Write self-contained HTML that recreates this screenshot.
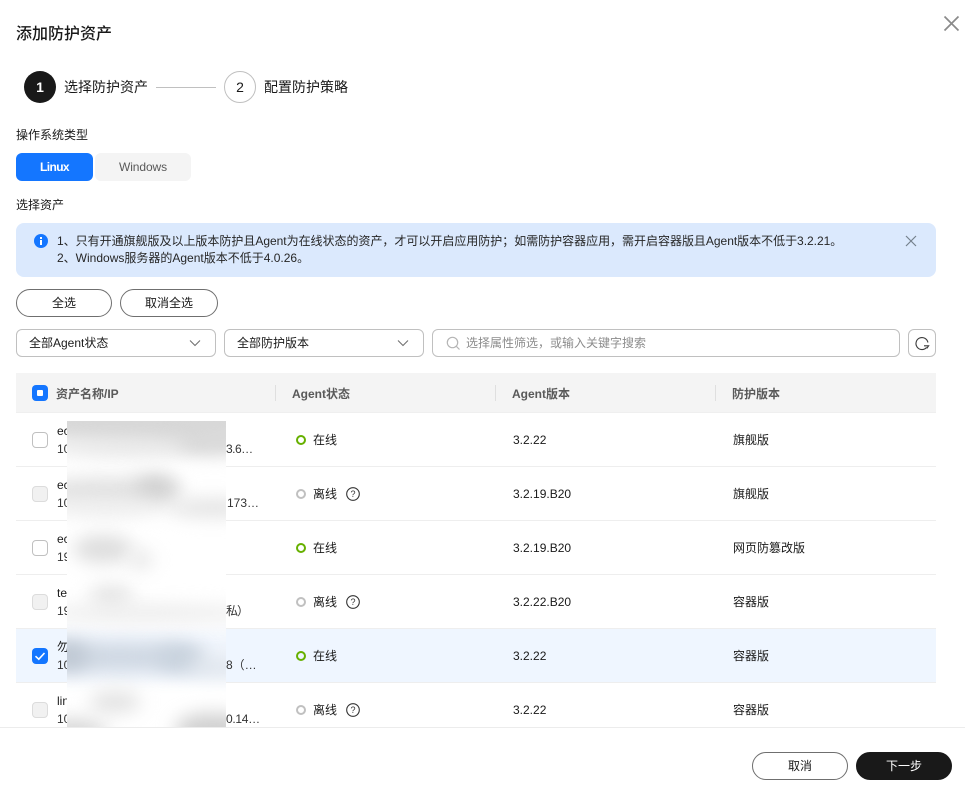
<!DOCTYPE html>
<html lang="zh">
<head>
<meta charset="utf-8">
<title>添加防护资产</title>
<style>
html,body{margin:0;padding:0;background:#fff}
body{width:965px;height:795px;position:relative;overflow:hidden;font-family:"Liberation Sans","Noto Sans CJK SC",sans-serif;font-size:12px;color:#191919}
.a{position:absolute;white-space:nowrap}
.t{line-height:18px;height:18px}
.btn{position:absolute;box-sizing:border-box;border:1px solid #6f6f6f;border-radius:14px;height:28px;line-height:26px;text-align:center;background:#fff;color:#191919}
.sel{position:absolute;box-sizing:border-box;border:1px solid #c0c0c0;border-radius:6px;height:28px;line-height:26px;background:#fff;top:329px}
.sel svg{position:absolute;left:172px;top:7px}
.row{position:absolute;left:16px;width:920px;height:53px;border-bottom:1px solid #eee}
.cb{position:absolute;left:32px;width:16px;height:16px;box-sizing:border-box;border:1px solid #c0c0c0;border-radius:4px;background:#fff}
.cb.dis{background:#f1f1f1;border-color:#dcdcdc}
.on{width:10px;height:10px;box-sizing:border-box;border-radius:50%;border:2.5px solid #66b000;position:absolute;left:296px}
.off{width:10px;height:10px;box-sizing:border-box;border-radius:50%;border:2px solid #c0c0c0;position:absolute;left:296px}
.th{color:#595959;font-weight:bold}
.div{position:absolute;top:385px;width:1px;height:16px;background:#dfdfdf}
.blob{position:absolute;border-radius:50%;filter:blur(9px)}
</style>
</head>
<body>
<div class="a" style="left:16px;top:24px;font-size:16px;line-height:22px;font-weight:500">添加防护资产</div>
<svg class="a" style="left:943px;top:15px" width="17" height="17" viewBox="0 0 17 17"><path d="M1.5 1.5L15.5 15.5M15.5 1.5L1.5 15.5" stroke="#8a8a8a" stroke-width="1.7" fill="none"/></svg>

<div class="a" style="left:24px;top:71px;width:32px;height:32px;border-radius:50%;background:#191919;color:#fff;text-align:center;line-height:32px;font-size:14px;font-weight:bold">1</div>
<div class="a" style="left:64px;top:77px;font-size:14px;line-height:20px">选择防护资产</div>
<div class="a" style="left:156px;top:87px;width:60px;height:1px;background:#c0c0c0"></div>
<div class="a" style="left:224px;top:71px;width:32px;height:32px;box-sizing:border-box;border:1px solid #c0c0c0;border-radius:50%;text-align:center;line-height:30px;font-size:14px">2</div>
<div class="a" style="left:264px;top:77px;font-size:14px;line-height:20px">配置防护策略</div>

<div class="a t" style="left:16px;top:126px">操作系统类型</div>
<div class="a" style="left:16px;top:153px;width:77px;height:28px;background:#1476ff;border-radius:6px;color:#fff;font-weight:bold;text-align:center;line-height:28px;letter-spacing:-.6px">Linux</div>
<div class="a" style="left:95px;top:153px;width:96px;height:28px;background:#f4f4f4;border-radius:6px;color:#595959;text-align:center;line-height:28px;letter-spacing:-.1px">Windows</div>
<div class="a t" style="left:16px;top:196px">选择资产</div>

<div class="a" style="left:16px;top:223px;width:920px;height:54px;background:#dbe9fd;border-radius:8px"></div>
<svg class="a" style="left:34px;top:234px" width="14" height="14" viewBox="0 0 14 14"><circle cx="7" cy="7" r="7" fill="#1476ff"/><rect x="6" y="6" width="2" height="5" fill="#fff"/><rect x="6" y="3" width="2" height="2" fill="#fff"/></svg>
<div class="a t" style="left:57px;top:232px;color:#262626;letter-spacing:-.02px">1、只有开通旗舰版及以上版本防护且Agent为在线状态的资产，才可以开启应用防护；如需防护容器应用，需开启容器版且Agent版本不低于3.2.21。</div>
<div class="a t" style="left:57px;top:249px;color:#262626">2、Windows服务器的Agent版本不低于4.0.26。</div>
<svg class="a" style="left:905px;top:235px" width="12" height="12" viewBox="0 0 12 12"><path d="M1 1L11 11M11 1L1 11" stroke="#75808c" stroke-width="1.2" fill="none"/></svg>

<div class="btn" style="left:16px;top:289px;width:96px">全选</div>
<div class="btn" style="left:120px;top:289px;width:98px">取消全选</div>

<div class="sel" style="left:16px;width:200px;padding-left:12px">全部Agent状态<svg width="12" height="12" viewBox="0 0 12 12"><path d="M1 3.5L6 8.5L11 3.5" stroke="#707070" stroke-width="1.1" fill="none"/></svg></div>
<div class="sel" style="left:224px;width:200px;padding-left:12px">全部防护版本<svg width="12" height="12" viewBox="0 0 12 12"><path d="M1 3.5L6 8.5L11 3.5" stroke="#707070" stroke-width="1.1" fill="none"/></svg></div>
<div class="sel" style="left:432px;width:468px;padding-left:33px;color:#8c8c8c">选择属性筛选，或输入关键字搜索<svg style="left:13px;top:6px" width="15" height="15" viewBox="0 0 15 15"><circle cx="6.5" cy="6.5" r="5.2" stroke="#b5b5b5" stroke-width="1.2" fill="none"/><path d="M10.3 10.3L13.5 13.5" stroke="#b5b5b5" stroke-width="1.2"/></svg></div>
<div class="sel" style="left:908px;width:28px"><svg style="left:5px;top:5px" width="16" height="16" viewBox="0 0 16 16"><path d="M12.6 12.4A6 6 0 1 1 13.9 7.5" stroke="#3a3a3a" stroke-width="1.1" fill="none"/><path d="M10 10.8H14.6L12.8 13.4" stroke="#3a3a3a" stroke-width="1.1" fill="none"/></svg></div>

<div class="a" style="left:16px;top:373px;width:920px;height:40px;background:#f4f4f4;border-bottom:1px solid #efefef;box-sizing:border-box"></div>
<div class="a" style="left:32px;top:385px;width:16px;height:16px;border-radius:4px;background:#1476ff"></div>
<div class="a" style="left:37px;top:390px;width:6px;height:6px;background:#fff;border-radius:1px"></div>
<div class="a t th" style="left:56px;top:385px">资产名称/IP</div>
<div class="div" style="left:275px"></div>
<div class="a t th" style="left:292px;top:385px">Agent状态</div>
<div class="div" style="left:495px"></div>
<div class="a t th" style="left:512px;top:385px">Agent版本</div>
<div class="div" style="left:715px"></div>
<div class="a t th" style="left:732px;top:385px">防护版本</div>

<div class="row" style="top:413px"></div>
<div class="row" style="top:467px"></div>
<div class="row" style="top:521px"></div>
<div class="row" style="top:575px"></div>
<div class="row" style="top:629px;background:#eff6ff"></div>
<div class="row" style="top:683px;border-bottom:0"></div>

<div class="cb" style="top:432px"></div>
<div class="a t" style="left:57px;top:422px">ecs</div><div class="a t" style="left:57px;top:440px;color:#333">10</div><div class="a t" style="left:226px;top:440px;color:#333;letter-spacing:-.5px">3.6…</div>
<div class="on" style="top:435px"></div><div class="a t" style="left:313px;top:431px">在线</div>
<div class="a t" style="left:513px;top:431px">3.2.22</div><div class="a t" style="left:733px;top:431px">旗舰版</div>

<div class="cb dis" style="top:486px"></div>
<div class="a t" style="left:57px;top:476px">ecs</div><div class="a t" style="left:57px;top:494px;color:#333">10</div><div class="a t" style="left:227px;top:494px;color:#333">173…</div>
<div class="off" style="top:489px"></div><div class="a t" style="left:313px;top:485px">离线</div>
<svg class="a" style="left:346px;top:487px" width="14" height="14" viewBox="0 0 14 14"><circle cx="7" cy="7" r="6.3" stroke="#333" stroke-width="1.1" fill="none"/><text x="7" y="10.2" font-size="9" text-anchor="middle" fill="#333" font-family="Liberation Sans">?</text></svg>
<div class="a t" style="left:513px;top:485px">3.2.19.B20</div><div class="a t" style="left:733px;top:485px">旗舰版</div>

<div class="cb" style="top:540px"></div>
<div class="a t" style="left:57px;top:530px">ecs</div><div class="a t" style="left:57px;top:548px;color:#333">19</div>
<div class="on" style="top:543px"></div><div class="a t" style="left:313px;top:539px">在线</div>
<div class="a t" style="left:513px;top:539px">3.2.19.B20</div><div class="a t" style="left:733px;top:539px">网页防篡改版</div>

<div class="cb dis" style="top:594px"></div>
<div class="a t" style="left:57px;top:584px">te</div><div class="a t" style="left:57px;top:602px;color:#333">19</div><div class="a t" style="left:226px;top:602px;color:#333;letter-spacing:-1px">私）</div>
<div class="off" style="top:597px"></div><div class="a t" style="left:313px;top:593px">离线</div>
<svg class="a" style="left:346px;top:595px" width="14" height="14" viewBox="0 0 14 14"><circle cx="7" cy="7" r="6.3" stroke="#333" stroke-width="1.1" fill="none"/><text x="7" y="10.2" font-size="9" text-anchor="middle" fill="#333" font-family="Liberation Sans">?</text></svg>
<div class="a t" style="left:513px;top:593px">3.2.22.B20</div><div class="a t" style="left:733px;top:593px">容器版</div>

<div class="a" style="left:32px;top:648px;width:16px;height:16px;border-radius:4px;background:#1476ff"></div>
<svg class="a" style="left:32px;top:648px" width="16" height="16" viewBox="0 0 16 16"><path d="M3.5 8.2L6.8 11.2L12.5 5" stroke="#fff" stroke-width="1.6" fill="none"/></svg>
<div class="a t" style="left:57px;top:638px">勿</div><div class="a t" style="left:57px;top:656px;color:#333">10</div><div class="a t" style="left:226px;top:656px;color:#333">8（…</div>
<div class="on" style="top:651px"></div><div class="a t" style="left:313px;top:647px">在线</div>
<div class="a t" style="left:513px;top:647px">3.2.22</div><div class="a t" style="left:733px;top:647px">容器版</div>

<div class="cb dis" style="top:702px"></div>
<div class="a t" style="left:57px;top:692px">lin</div><div class="a t" style="left:57px;top:710px;color:#333">10</div><div class="a t" style="left:226px;top:710px;color:#333;letter-spacing:-.3px">0.14…</div>
<div class="off" style="top:705px"></div><div class="a t" style="left:313px;top:701px">离线</div>
<svg class="a" style="left:346px;top:703px" width="14" height="14" viewBox="0 0 14 14"><circle cx="7" cy="7" r="6.3" stroke="#333" stroke-width="1.1" fill="none"/><text x="7" y="10.2" font-size="9" text-anchor="middle" fill="#333" font-family="Liberation Sans">?</text></svg>
<div class="a t" style="left:513px;top:701px">3.2.22</div><div class="a t" style="left:733px;top:701px">容器版</div>

<div class="a" style="left:67px;top:421px;width:159px;height:307px;overflow:hidden;background:#fff">
  <div class="a" style="left:-20px;top:210px;width:200px;height:50px;background:#f0f5fc;filter:blur(7px)"></div>
  <div class="blob" style="left:-40px;top:-24px;width:240px;height:52px;background:#d8d8d8"></div>
  <div class="blob" style="left:105px;top:8px;width:85px;height:26px;background:#d8d8d8"></div>
  <div class="blob" style="left:-30px;top:18px;width:150px;height:16px;background:#ebebeb"></div>
  <div class="blob" style="left:-35px;top:56px;width:150px;height:30px;background:#e2e2e2"></div>
  <div class="blob" style="left:68px;top:54px;width:42px;height:24px;background:#d0d0d0"></div>
  <div class="blob" style="left:100px;top:78px;width:90px;height:18px;background:#e2e2e2"></div>
  <div class="blob" style="left:-25px;top:80px;width:125px;height:14px;background:#eeeeee"></div>
  <div class="blob" style="left:6px;top:114px;width:60px;height:28px;background:#dddddd"></div>
  <div class="blob" style="left:62px;top:130px;width:24px;height:18px;background:#e6e6e6"></div>
  <div class="blob" style="left:22px;top:164px;width:44px;height:22px;background:#e4e4e4"></div>
  <div class="blob" style="left:-30px;top:184px;width:220px;height:16px;background:#ebebeb"></div>
  <div class="blob" style="left:-30px;top:222px;width:165px;height:28px;background:#ced7e2"></div>
  <div class="blob" style="left:-18px;top:220px;width:40px;height:30px;background:#bfc8d3"></div>
  <div class="blob" style="left:88px;top:224px;width:48px;height:26px;background:#c8d2dd"></div>
  <div class="blob" style="left:120px;top:238px;width:60px;height:16px;background:#dde3ea"></div>
  <div class="blob" style="left:22px;top:270px;width:52px;height:22px;background:#e2e2e2"></div>
  <div class="blob" style="left:-30px;top:298px;width:70px;height:24px;background:#d6d6d6"></div>
  <div class="blob" style="left:108px;top:292px;width:75px;height:32px;background:#d0d0d0"></div>
</div>

<div class="a" style="left:0;top:727px;width:965px;height:68px;background:#fff;border-top:1px solid #ececec;box-sizing:border-box"></div>
<div class="btn" style="left:752px;top:752px;width:96px">取消</div>
<div class="btn" style="left:856px;top:752px;width:96px;background:#191919;border-color:#191919;color:#fff">下一步</div>
</body>
</html>
